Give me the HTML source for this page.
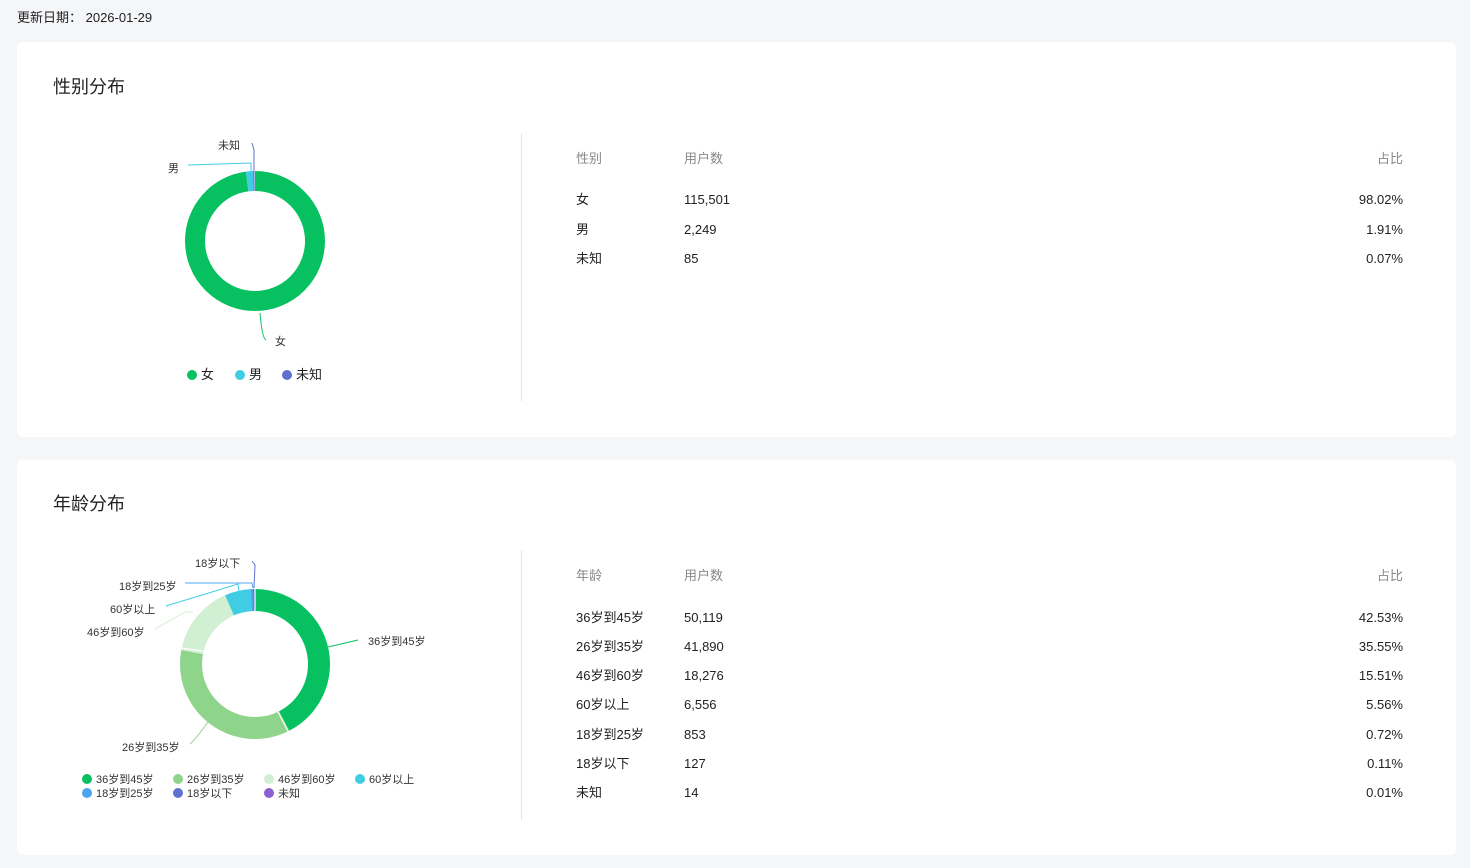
<!DOCTYPE html><html><head><meta charset="utf-8"><style>
*{margin:0;padding:0;box-sizing:border-box}
body{width:1470px;height:868px;background:#f5f6f8;font-family:"Liberation Sans","Noto Sans CJK SC",sans-serif;color:#222;position:relative;overflow:hidden}
.a{position:absolute;white-space:nowrap;line-height:16px}
.card{position:absolute;left:17px;width:1439px;height:395px;background:#fff;border-radius:6px}
.t{font-size:18px;color:#222;line-height:22px}
.h{font-size:13px;color:#888}
.r{font-size:13px;color:#222}
.vl{position:absolute;left:521px;width:1px;background:#e5e5e5}
.lab{font-size:11px;color:#333;line-height:14px}
.dot{display:inline-block;width:10px;height:10px;border-radius:50%;vertical-align:-1px;margin-right:4px}
</style></head><body>
<div class="a" style="left:17px;top:10px;font-size:13px">更新日期： 2026-01-29</div>
<div class="card" style="top:42px"></div>
<div class="card" style="top:460px"></div>
<div class="a t" style="left:53px;top:76px">性别分布</div>
<div class="a t" style="left:53px;top:493px">年龄分布</div>
<div class="vl" style="top:133px;height:268px"></div>
<div class="vl" style="top:550px;height:270px"></div>

<svg class="a" style="left:0;top:0" width="1470" height="868">
<g transform="translate(255,241) rotate(-90)" fill="none" stroke-width="20">
<circle r="60" pathLength="100" stroke="#07c160" stroke-dasharray="98.02 100"/>
<circle r="60" pathLength="100" stroke="#40cde3" stroke-dasharray="1.91 100" stroke-dashoffset="-98.02"/>
<circle r="60" pathLength="100" stroke="#5f71cf" stroke-dasharray="0.3 100" stroke-dashoffset="-99.7"/>
</g>
<g fill="none" stroke-width="1">
<path d="M260 313 Q262 338 266 340" stroke="#07c160"/>
<path d="M251 171 L251 163 L188 165" stroke="#40cde3"/>
<path d="M254 171 L254 150 L252 143" stroke="#5f71cf"/>
</g>
<g transform="translate(255,664) rotate(-90)" fill="none" stroke-width="22">
<circle r="64" pathLength="100" stroke="#07c160" stroke-dasharray="42.53 100"/>
<circle r="64" pathLength="100" stroke="#8ed58b" stroke-dasharray="35.55 100" stroke-dashoffset="-42.53"/>
<circle r="64" pathLength="100" stroke="#d1efd3" stroke-dasharray="15.51 100" stroke-dashoffset="-78.08"/>
<circle r="64" pathLength="100" stroke="#40cde3" stroke-dasharray="5.56 100" stroke-dashoffset="-93.59"/>
<circle r="64" pathLength="100" stroke="#4ea5ef" stroke-dasharray="0.72 100" stroke-dashoffset="-99.15"/>
<circle r="64" pathLength="100" stroke="#5f71cf" stroke-dasharray="0.3 100" stroke-dashoffset="-99.7"/>
</g>
<g stroke="#fff" stroke-width="1.2">
<line x1="255" y1="588" x2="255" y2="612"/>
<line x1="278" y1="712" x2="289" y2="733"/>
<line x1="203" y1="651" x2="180" y2="648"/>
</g>
<g fill="none" stroke-width="1">
<path d="M328 647 L358 640" stroke="#07c160"/>
<path d="M208 722 Q195 740 190 744" stroke="#8ed58b"/>
<path d="M193 612 L185 612 L155 629" stroke="#d1efd3"/>
<path d="M239 591 L238 584 L166 606" stroke="#40cde3"/>
<path d="M253 588 L252 583 L185 583" stroke="#4ea5ef"/>
<path d="M254 588 L255 565 L252 561" stroke="#5f71cf"/>
</g>
</svg>
<div class="a lab" style="left:218px;top:139px">未知</div>
<div class="a lab" style="left:168px;top:162px">男</div>
<div class="a lab" style="left:275px;top:335px">女</div>
<div class="a" style="left:187px;top:367px;font-size:13px"><span class="dot" style="background:#07c160"></span>女</div>
<div class="a" style="left:235px;top:367px;font-size:13px"><span class="dot" style="background:#40cde3"></span>男</div>
<div class="a" style="left:282px;top:367px;font-size:13px"><span class="dot" style="background:#5f71cf"></span>未知</div>

<div class="a lab" style="left:195px;top:557px">18岁以下</div>
<div class="a lab" style="left:119px;top:580px">18岁到25岁</div>
<div class="a lab" style="left:110px;top:603px">60岁以上</div>
<div class="a lab" style="left:87px;top:626px">46岁到60岁</div>
<div class="a lab" style="left:368px;top:635px">36岁到45岁</div>
<div class="a lab" style="left:122px;top:741px">26岁到35岁</div>
<div class="a lab" style="left:82px;top:773px"><span class="dot" style="background:#07c160"></span>36岁到45岁</div>
<div class="a lab" style="left:173px;top:773px"><span class="dot" style="background:#8ed58b"></span>26岁到35岁</div>
<div class="a lab" style="left:264px;top:773px"><span class="dot" style="background:#d1efd3"></span>46岁到60岁</div>
<div class="a lab" style="left:355px;top:773px"><span class="dot" style="background:#40cde3"></span>60岁以上</div>
<div class="a lab" style="left:82px;top:787px"><span class="dot" style="background:#4ea5ef"></span>18岁到25岁</div>
<div class="a lab" style="left:173px;top:787px"><span class="dot" style="background:#5f71cf"></span>18岁以下</div>
<div class="a lab" style="left:264px;top:787px"><span class="dot" style="background:#8e5fd0"></span>未知</div>

<div class="a h" style="left:576px;top:151px">性别</div><div class="a h" style="left:684px;top:151px">用户数</div><div class="a h" style="right:67px;top:151px">占比</div>
<div class="a r" style="left:576px;top:192px">女</div><div class="a r" style="left:684px;top:192px">115,501</div><div class="a r" style="right:67px;top:192px">98.02%</div>
<div class="a r" style="left:576px;top:222px">男</div><div class="a r" style="left:684px;top:222px">2,249</div><div class="a r" style="right:67px;top:222px">1.91%</div>
<div class="a r" style="left:576px;top:251px">未知</div><div class="a r" style="left:684px;top:251px">85</div><div class="a r" style="right:67px;top:251px">0.07%</div>

<div class="a h" style="left:576px;top:568px">年龄</div><div class="a h" style="left:684px;top:568px">用户数</div><div class="a h" style="right:67px;top:568px">占比</div>
<div class="a r" style="left:576px;top:610px">36岁到45岁</div><div class="a r" style="left:684px;top:610px">50,119</div><div class="a r" style="right:67px;top:610px">42.53%</div>
<div class="a r" style="left:576px;top:639px">26岁到35岁</div><div class="a r" style="left:684px;top:639px">41,890</div><div class="a r" style="right:67px;top:639px">35.55%</div>
<div class="a r" style="left:576px;top:668px">46岁到60岁</div><div class="a r" style="left:684px;top:668px">18,276</div><div class="a r" style="right:67px;top:668px">15.51%</div>
<div class="a r" style="left:576px;top:697px">60岁以上</div><div class="a r" style="left:684px;top:697px">6,556</div><div class="a r" style="right:67px;top:697px">5.56%</div>
<div class="a r" style="left:576px;top:727px">18岁到25岁</div><div class="a r" style="left:684px;top:727px">853</div><div class="a r" style="right:67px;top:727px">0.72%</div>
<div class="a r" style="left:576px;top:756px">18岁以下</div><div class="a r" style="left:684px;top:756px">127</div><div class="a r" style="right:67px;top:756px">0.11%</div>
<div class="a r" style="left:576px;top:785px">未知</div><div class="a r" style="left:684px;top:785px">14</div><div class="a r" style="right:67px;top:785px">0.01%</div>
</body></html>
